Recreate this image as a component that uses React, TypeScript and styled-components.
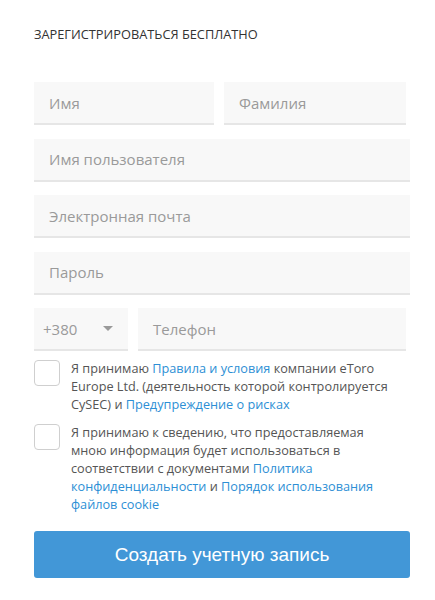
import React from 'react'
import styled, { createGlobalStyle } from 'styled-components'

const GlobalStyle = createGlobalStyle`
  body {
    margin: 0;
    background: #fff;
    font-family: 'Open Sans', 'Noto Sans', sans-serif;
  }
`;

const Form = styled.div`
  display: flex;
  flex-direction: column;
  width: 376px;
  padding: 26px 0 0 34px;
`;

const Title = styled.h2`
  margin: 0 0 40px;
  font-size: 12.8px;
  font-weight: 400;
  color: #333;
  line-height: 16px;
  text-transform: uppercase;
`;

const FieldSet = styled.div`
  display: flex;
  flex-direction: column;
  gap: 13.5px;
`;

const Row = styled.div<{ $cols?: string; $narrow?: boolean }>`
  display: grid;
  grid-template-columns: ${p => p.$cols || '1fr'};
  gap: 10px;
  margin-right: ${p => (p.$narrow ? '4px' : '0')};
`;

const Field = styled.div<{ $left?: number }>`
  display: flex;
  align-items: center;
  justify-content: space-between;
  height: 41px;
  padding: 0 15px 0 ${p => p.$left ?? 15}px;
  background: #f8f8f8;
  border-bottom: 2px solid #e6e6e6;
  font-size: 15px;
  color: #9a9a9a;
  box-sizing: content-box;
`;

const Caret = styled.span`
  width: 0;
  height: 0;
  border-left: 5px solid transparent;
  border-right: 5px solid transparent;
  border-top: 5px solid #9a9a9a;
`;

const Consents = styled.div`
  display: flex;
  flex-direction: column;
  gap: 10px;
  margin-top: 8px;
`;

const Consent = styled.div`
  display: flex;
  align-items: flex-start;
  gap: 11px;
  font-size: 12.7px;
  line-height: 18px;
  color: #555;
`;

const Box = styled.span`
  flex: none;
  width: 24px;
  height: 24px;
  margin-top: 1px;
  border: 1px solid #cfcfcf;
  border-radius: 4px;
  background: #fff;
`;

const Text = styled.p`
  margin: 0;
  padding-right: 14px;
`;

const Link = styled.a`
  color: #2d8fd5;
  text-decoration: none;
`;

const Submit = styled.button`
  margin-top: 18px;
  height: 47px;
  border: none;
  border-radius: 3px;
  background: #4297d7;
  color: #fff;
  font-family: 'Liberation Sans', Arial, sans-serif;
  font-size: 19px;
`;

function App() {
  return (
    <>
      <GlobalStyle />
      <Form>
        <Title>Зарегистрироваться бесплатно</Title>
        <FieldSet>
          <Row $cols="180px 1fr" $narrow>
            <Field>Имя</Field>
            <Field>Фамилия</Field>
          </Row>
          <Row>
            <Field>Имя пользователя</Field>
          </Row>
          <Row>
            <Field>Электронная почта</Field>
          </Row>
          <Row>
            <Field>Пароль</Field>
          </Row>
          <Row $cols="94px 1fr" $narrow>
            <Field $left={9}>+380<Caret /></Field>
            <Field>Телефон</Field>
          </Row>
        </FieldSet>
        <Consents>
          <Consent>
            <Box />
            <Text>
              Я принимаю <Link>Правила и условия</Link> компании eToro Europe Ltd. (деятельность которой контролируется CySEC) и <Link>Предупреждение о рисках</Link>
            </Text>
          </Consent>
          <Consent>
            <Box />
            <Text>
              Я принимаю к сведению, что предоставляемая мною информация будет использоваться в соответствии с документами <Link>Политика конфиденциальности</Link> и <Link>Порядок использования файлов cookie</Link>
            </Text>
          </Consent>
        </Consents>
        <Submit>Создать учетную запись</Submit>
      </Form>
    </>
  )
}

export default App
